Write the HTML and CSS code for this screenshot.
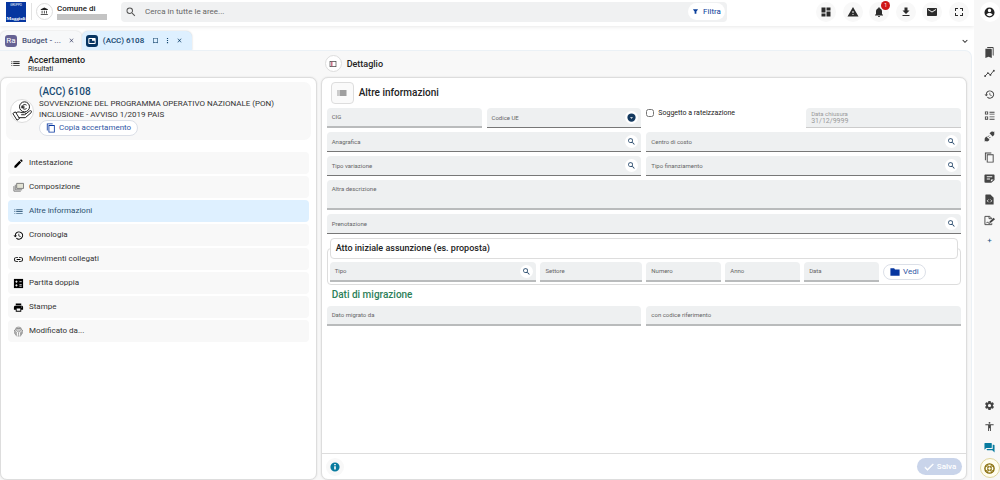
FILE: index.html
```
<!DOCTYPE html>
<html lang="it">
<head>
<meta charset="utf-8">
<meta name="viewport" content="width=device-width, initial-scale=1">
<title>Accertamento (ACC) 6108</title>
<link rel="stylesheet" href="styles.css">
</head>
<body>
<svg class="sprite" aria-hidden="true">
  <symbol id="search" viewBox="0 0 24 24"><path d="M15.5 14h-.79l-.28-.27A6.47 6.47 0 0 0 16 9.5 6.5 6.5 0 1 0 9.500 16c1.610 0 3.090-.59 4.230-1.570l.27.28v.79l5 4.990L20.490 19l-4.990-5zm-6 0C7.010 14 5 11.990 5 9.500S7.010 5 9.500 5 14 7.010 14 9.500 11.990 14 9.500 14z"/></symbol>
  <symbol id="list" viewBox="0 0 24 24"><path d="M3 13h2v-2H3v2zm0 4h2v-2H3v2zm0-8h2V7H3v2zm4 4h14v-2H7v2zm0 4h14v-2H7v2zM7 7v2h14V7H7z"/></symbol>
  <symbol id="close" viewBox="0 0 24 24"><path d="M19 6.410 17.590 5 12 10.590 6.410 5 5 6.410 10.590 12 5 17.590 6.410 19 12 13.410 17.590 19 19 17.590 13.410 12z"/></symbol>
  <symbol id="bank" viewBox="0 0 24 24"><path d="M6.500 10h-2v7h2v-7zm6 0h-2v7h2v-7zm8.500 9H2v2h19v-2zm-2.500-9h-2v7h2v-7zM11.500 1 2 6v2h19V6l-9.500-5z"/></symbol>
  <symbol id="filter" viewBox="0 0 24 24"><path d="M4 4h16v2l-5 6v8h-6v-8L4 6z"/></symbol>
  <symbol id="dashboard" viewBox="0 0 24 24"><path d="M3 13h8V3H3v10zm0 8h8v-6H3v6zm10 0h8V11h-8v10zm0-18v6h8V3h-8z"/></symbol>
  <symbol id="warning" viewBox="0 0 24 24"><path d="M1 21h22L12 2 1 21zm12-3h-2v-2h2v2zm0-4h-2v-4h2v4z"/></symbol>
  <symbol id="bell" viewBox="0 0 24 24"><path d="M12 22c1.100 0 2-.9 2-2h-4c0 1.100.9 2 2 2zm6-6v-5c0-3.070-1.630-5.640-4.500-6.320V4a1.500 1.500 0 0 0-3 0v.68C7.640 5.360 6 7.920 6 11v5l-2 2v1h16v-1l-2-2z"/></symbol>
  <symbol id="download" viewBox="0 0 24 24"><path d="M19 9h-4V3H9v6H5l7 7 7-7zM5 18v2h14v-2H5z"/></symbol>
  <symbol id="mail" viewBox="0 0 24 24"><path d="M20 4H4c-1.100 0-2 .9-2 2v12c0 1.100.9 2 2 2h16c1.100 0 2-.9 2-2V6c0-1.100-.9-2-2-2zm0 4-8 5-8-5V6l8 5 8-5v2z"/></symbol>
  <symbol id="expand" viewBox="0 0 24 24"><path d="M4 4h6v2H6v4H4V4zm10 0h6v6h-2V6h-4V4zM4 14h2v4h4v2H4v-6zm14 0h2v6h-6v-2h4v-4z"/></symbol>
  <symbol id="account" viewBox="0 0 24 24"><path fill-rule="evenodd" d="M12 1a11 11 0 1 0 0 22 11 11 0 0 0 0-22zM12 4a3.700 3.700 0 1 1 0 7.400A3.700 3.700 0 0 1 12 4zm0 16a8 8 0 0 1-6.700-3.600c.1-2.200 4.500-3.400 6.700-3.400s6.600 1.200 6.700 3.400A8 8 0 0 1 12 20z"/></symbol>
  <symbol id="chevron" viewBox="0 0 24 24"><path d="m6 8 6 6 6-6 2 2-8 8-8-8z"/></symbol>
  <symbol id="bookmark" viewBox="0 0 24 24"><path d="M4 3h16v18l-8-2-8 2V3zm2 2v13l6-1 6 1V5H6z"/></symbol>
  <symbol id="more" viewBox="0 0 24 24"><path d="M10 3h4v4h-4zM10 10h4v4h-4zM10 17h4v4h-4z"/></symbol>
  <symbol id="tab" viewBox="0 0 24 24"><path d="M21 3H3c-1.100 0-2 .9-2 2v14c0 1.100.9 2 2 2h18c1.100 0 2-.9 2-2V5c0-1.100-.9-2-2-2zm-1 15H4V6h8v5h8v7z"/></symbol>
  <symbol id="copy" viewBox="0 0 24 24"><path d="M16 1H2v17h2V3h12V1zm5 4H6v18h15V5zm-2 16H8V7h11v14z"/></symbol>
  <symbol id="pencil" viewBox="0 0 24 24"><path d="M3 17.250V21h3.750L17.810 9.940l-3.750-3.750L3 17.250zM20.710 7.040a1 1 0 0 0 0-1.410l-2.340-2.340a1 1 0 0 0-1.410 0l-1.830 1.830 3.750 3.750 1.830-1.830z"/></symbol>
  <symbol id="layers" viewBox="0 0 24 24"><path d="M8 3h15v11H8V3z" fill="#e2e2d4" stroke="currentColor" stroke-width="2"/><path d="M5 6v11h15M2 9v11h15" fill="none" stroke="currentColor" stroke-width="2"/></symbol>
  <symbol id="history" viewBox="0 0 24 24"><path d="M13 3a9 9 0 0 0-9 9H1l3.890 3.890.07.14L9 12H6a7 7 0 1 1 2.060 4.940l-1.420 1.420A9 9 0 1 0 13 3zm-1 5v5l4.280 2.540.72-1.210-3.500-2.080V8H12z"/></symbol>
  <symbol id="link" viewBox="0 0 24 24"><path d="M3.900 12A3.100 3.100 0 0 1 7 8.900h4V7H7a5 5 0 0 0 0 10h4v-1.900H7A3.100 3.100 0 0 1 3.900 12zM8 13h8v-2H8v2zm9-6h-4v1.900h4a3.100 3.100 0 0 1 0 6.200h-4V17h4a5 5 0 0 0 0-10z"/></symbol>
  <symbol id="calc" viewBox="0 0 24 24"><path d="M2 2h20v20H2z"/><path d="M5 8h5M7.500 5.500v5M14 8h5M5 16h5M7.500 13.500v5M14 14.500h5M14 18h5" stroke="#fff" stroke-width="1.700"/></symbol>
  <symbol id="print" viewBox="0 0 24 24"><path d="M19 8H5c-1.660 0-3 1.340-3 3v6h4v4h12v-4h4v-6c0-1.660-1.340-3-3-3zm-3 11H8v-5h8v5zm3-7a1 1 0 1 1 0-2 1 1 0 0 1 0 2zm-1-9H6v4h12V3z"/></symbol>
  <symbol id="finger" viewBox="0 0 24 24"><g fill="none" stroke="currentColor" stroke-width="1.500" stroke-linecap="round"><path d="M6 4.500C9 1.500 15 1.500 18 4.500M3 10C5 3 19 3 21 10M3.500 16C2 7 9 5.500 12 5.500S22 7 20.500 16M5.500 19.500C3.500 12 7 8.500 12 8.500s8 4 6.500 11M8.500 22C5.500 15 8 11.500 12 11.500s5.500 3.500 4 10.500M12 14.500c0 3 0 5 .5 8"/></g></symbol>
  <symbol id="panel" viewBox="0 0 24 24"><path d="M2 3h20v18H2V3zm2 2v14h16V5H4z" fill="#454545"/><path d="M7 5h3v14H7z" fill="#b22a50"/></symbol>
  <symbol id="folder" viewBox="0 0 24 24"><path d="M10 3H1v18h22V6H12z"/></symbol>
  <symbol id="check" viewBox="0 0 24 24"><path d="M9 16.200 4.800 12l-1.400 1.400L9 19 21 7l-1.400-1.400z" stroke="currentColor"/></symbol>
  <symbol id="dropdown" viewBox="0 0 24 24"><path fill-rule="evenodd" d="M12 1a11 11 0 1 0 0 22 11 11 0 0 0 0-22zm0 14-4-4h8z"/></symbol>
  <symbol id="info" viewBox="0 0 24 24"><path fill-rule="evenodd" d="M12 1a11 11 0 1 0 0 22 11 11 0 0 0 0-22zm2 17h-4v-8h4v8zm0-10h-4V5h4v3z"/></symbol>
  <symbol id="bookmarks" viewBox="0 0 24 24"><path d="m19 18 2 1V2c0-1.100-.9-2-2-2H7v2h12v16zM15 4H3v20l7-3 7 3V6c0-1.100-.9-2-2-2z"/></symbol>
  <symbol id="chart" viewBox="0 0 24 24"><path d="m2 18 6.500-7 5.500 4 7-9" fill="none" stroke="currentColor" stroke-width="2"/><circle cx="2.500" cy="17.500" r="2"/><circle cx="8.500" cy="11" r="2"/><circle cx="14" cy="15" r="2"/><circle cx="21.500" cy="6" r="2"/></symbol>
  <symbol id="ballot" viewBox="0 0 24 24"><path d="M2 3h7v7H2V3zm2 2v3h3V5H4zm-2 9h7v7H2v-7zm2 2v3h3v-3H4zm8-12h11v2H12zM12 8h11v2H12zM12 14h11v2H12zM12 19h11v2H12z"/></symbol>
  <symbol id="plug" viewBox="0 0 24 24"><path d="m12 5 7 7 2-2c2-2 2-4 1-6l1-2-1-1-2 1c-2-1-4-1-6 1zM5 12l7 7-2 2c-2 2-4 2-6 1l-2 1-1-1 1-2c-1-2-1-4 1-6z"/><path d="m8 13 3-3M11 16l3-3" stroke="currentColor" stroke-width="2"/></symbol>
  <symbol id="note" viewBox="0 0 24 24"><path d="M3 3h18c1 0 2 1 2 2v10l-7 6H3c-1 0-2-1-2-2V5c0-1 1-2 2-2zm3 4v2h12V7H6zm0 5v2h7v-2H6zm9 7 6-5h-6z" fill-rule="evenodd"/></symbol>
  <symbol id="code" viewBox="0 0 24 24"><path d="M4 1h10l7 7v15H3V2z"/><path d="M10 12l-3 3 3 3M14 12l3 3-3 3" fill="none" stroke="#fff" stroke-width="1.700"/></symbol>
  <symbol id="sign" viewBox="0 0 24 24"><path d="M17 8V7l-5-4H2v18h15v-3M11 3v5h6M5 18l3-3 2 3h4" fill="none" stroke="currentColor" stroke-width="2"/><path d="m12 14 9-8 3 3-9 8h-3z"/></symbol>
  <symbol id="gear" viewBox="0 0 24 24"><path fill-rule="evenodd" d="M19.430 12.980a7.800 7.800 0 0 0 0-1.960l2.110-1.650c.19-.15.240-.42.120-.64l-2-3.460c-.12-.22-.39-.3-.61-.22l-2.490 1a7.300 7.300 0 0 0-1.690-.98l-.38-2.650A.5.5 0 0 0 14 2h-4a.5.5 0 0 0-.49.420l-.38 2.650c-.61.250-1.170.59-1.690.98l-2.490-1a.5.5 0 0 0-.61.220l-2 3.460c-.13.220-.7.490.12.640l2.110 1.650a8 8 0 0 0 0 1.960l-2.110 1.650a.5.5 0 0 0-.12.640l2 3.460c.12.220.39.300.61.220l2.490-1c.52.400 1.080.73 1.690.98l.38 2.650c.3.240.24.420.49.420h4c.25 0 .46-.18.490-.42l.38-2.650a7.300 7.300 0 0 0 1.690-.98l2.490 1c.23.090.49 0 .61-.22l2-3.460a.5.5 0 0 0-.12-.64l-2.110-1.650zM12 15.500a3.500 3.500 0 1 1 0-7 3.500 3.500 0 0 1 0 7z"/></symbol>
  <symbol id="person" viewBox="0 0 24 24"><path d="M12 2a2 2 0 1 1 0 4 2 2 0 0 1 0-4zm9 7h-6v13h-2v-6h-2v6H9V9H3V7h18v2z"/></symbol>
  <symbol id="chat" viewBox="0 0 24 24"><path d="M21 6h-2v9H6v2c0 .55.450 1 1 1h11l5 5V7c0-.55-1-1-2-1zm-4 6V3c0-.55-.45-1-1-1H2c-.55 0-1 .45-1 1v14l4-4h11c.55 0 1-.45 1-1z"/></symbol>
  <symbol id="help" viewBox="0 0 24 24"><circle cx="12" cy="12" r="10" fill="none" stroke="currentColor" stroke-width="3"/><circle cx="12" cy="12" r="4" fill="none" stroke="currentColor" stroke-width="2"/><path d="m4 6 5 4M7 3l3 6M20 6l-5 4M17 3l-3 6M4 18l5-4M7 21l3-6M20 18l-5-4M17 21l-3-6" stroke="currentColor" stroke-width="2"/></symbol>
  <symbol id="coin-hand" viewBox="0 0 24 24"><g fill="none" stroke="currentColor" stroke-width="1.200" stroke-linejoin="round"><circle cx="15" cy="7" r="6"/><path d="M17.500 5c-3-2-5 0-5 2s2 4 5 2M11 6.300h4M11 8h4M1 15l3-2 5 8-3 2zM5 14c3-2 5 0 7 0h3c2 0 2 2 0 2.500h-4M16 16l5-4c2-1 3 0 2 2l-7 6H8"/></g></symbol>
</svg>

<div class="app">
  <div class="main">
    <header class="topbar">
      <div class="logo" aria-label="Logo"><span class="logo-top">GRUPPO</span><span class="logo-name">Maggioli</span></div>
      <div class="org">
        <span class="org-icon"><svg><use href="#bank"/></svg></span>
        <div class="org-text"><span>Comune di</span><span class="org-hidden"></span></div>
      </div>
      <div class="search" role="search">
        <svg><use href="#search"/></svg>
        <input type="search" aria-label="Cerca" placeholder="Cerca in tutte le aree...">
        <button class="filter" type="button"><svg><use href="#filter"/></svg>Filtra</button>
      </div>
      <nav class="tools" aria-label="Strumenti">
        <button type="button" aria-label="Dashboard"><svg><use href="#dashboard"/></svg></button>
        <button type="button" aria-label="Avvisi"><svg><use href="#warning"/></svg></button>
        <button type="button" aria-label="Notifiche"><svg><use href="#bell"/></svg><span class="badge">1</span></button>
        <button type="button" aria-label="Scarica"><svg><use href="#download"/></svg></button>
        <button type="button" aria-label="Messaggi"><svg><use href="#mail"/></svg></button>
        <button type="button" aria-label="Schermo intero"><svg><use href="#expand"/></svg></button>
      </nav>
    </header>

    <nav class="tabs" aria-label="Schede">
      <div class="tab">
        <span class="tab-icon">Ra</span>
        <button type="button" class="tab-name">Budget - ...</button>
        <button type="button" class="tab-action" aria-label="Chiudi"><svg><use href="#close"/></svg></button>
      </div>
      <div class="tab tab-active">
        <span class="tab-icon"><svg><use href="#tab"/></svg></span>
        <button type="button" class="tab-name">(ACC) 6108</button>
        <button type="button" class="tab-action" aria-label="Segnalibro"><svg><use href="#bookmark"/></svg></button>
        <button type="button" class="tab-action" aria-label="Altro"><svg><use href="#more"/></svg></button>
        <button type="button" class="tab-action" aria-label="Chiudi"><svg><use href="#close"/></svg></button>
      </div>
      <button type="button" class="tab-more" aria-label="Tutte le schede"><svg><use href="#chevron"/></svg></button>
    </nav>

    <div class="workspace">
      <section class="side">
        <div class="pane-head">
          <svg><use href="#list"/></svg>
          <div><h1>Accertamento</h1><p>Risultati</p></div>
        </div>
        <div class="pane">
          <div class="summary">
            <span class="summary-icon"><svg><use href="#coin-hand"/></svg></span>
            <div class="summary-body">
              <h2>(ACC) 6108</h2>
              <p>SOVVENZIONE DEL PROGRAMMA OPERATIVO NAZIONALE (PON)<br>INCLUSIONE - AVVISO 1/2019 PAIS</p>
              <button type="button" class="pill"><svg><use href="#copy"/></svg>Copia accertamento</button>
            </div>
          </div>
          <ul class="menu">
            <li><a href="#"><svg><use href="#pencil"/></svg>Intestazione</a></li>
            <li><a href="#"><svg class="soft"><use href="#layers"/></svg>Composizione</a></li>
            <li><a href="#" class="current" aria-current="page"><svg><use href="#list"/></svg>Altre informazioni</a></li>
            <li><a href="#"><svg><use href="#history"/></svg>Cronologia</a></li>
            <li><a href="#"><svg><use href="#link"/></svg>Movimenti collegati</a></li>
            <li><a href="#"><svg><use href="#calc"/></svg>Partita doppia</a></li>
            <li><a href="#"><svg><use href="#print"/></svg>Stampe</a></li>
            <li><a href="#"><svg class="soft"><use href="#finger"/></svg>Modificato da...</a></li>
          </ul>
        </div>
      </section>

      <main class="detail">
        <div class="pane-head">
          <button type="button" class="toggle" aria-label="Mostra pannello"><svg><use href="#panel"/></svg></button>
          <h1>Dettaglio</h1>
        </div>
        <form class="pane card">
          <div class="card-title"><span class="title-icon"><svg><use href="#list"/></svg></span><h2>Altre informazioni</h2></div>
          <div class="fields">
            <div class="field light"><label for="cig">CIG</label><input id="cig"></div>
            <div class="field"><label for="ue">Codice UE</label><input id="ue"><button type="button" aria-label="Apri elenco"><svg><use href="#dropdown"/></svg></button></div>
            <div class="tick"><input type="checkbox" id="rate"><label for="rate">Soggetto a rateizzazione</label></div>
            <div class="field filled"><label for="chiusura">Data chiusura</label><input id="chiusura" value="31/12/9999" disabled></div>
            <div class="field half"><label for="anag">Anagrafica</label><input id="anag"><button type="button" aria-label="Cerca anagrafica"><svg><use href="#search"/></svg></button></div>
            <div class="field half"><label for="centro">Centro di costo</label><input id="centro"><button type="button" aria-label="Cerca centro"><svg><use href="#search"/></svg></button></div>
            <div class="field half"><label for="variaz">Tipo variazione</label><input id="variaz"><button type="button" aria-label="Cerca variazione"><svg><use href="#search"/></svg></button></div>
            <div class="field half"><label for="finanz">Tipo finanziamento</label><input id="finanz"><button type="button" aria-label="Cerca finanziamento"><svg><use href="#search"/></svg></button></div>
            <div class="field full area"><label for="descr">Altra descrizione</label><textarea id="descr" rows="1"></textarea></div>
            <div class="field full"><label for="pren">Prenotazione</label><input id="pren"><button type="button" aria-label="Cerca prenotazione"><svg><use href="#search"/></svg></button></div>
          </div>
          <fieldset class="act">
            <legend>Atto iniziale assunzione (es. proposta)</legend>
            <div class="act-fields">
              <div class="field light"><label for="tipo">Tipo</label><input id="tipo"><button type="button" aria-label="Cerca tipo"><svg><use href="#search"/></svg></button></div>
              <div class="field light"><label for="settore">Settore</label><input id="settore"></div>
              <div class="field light"><label for="numero">Numero</label><input id="numero"></div>
              <div class="field light"><label for="anno">Anno</label><input id="anno"></div>
              <div class="field light"><label for="data">Data</label><input id="data"></div>
              <button type="button" class="pill"><svg><use href="#folder"/></svg>Vedi</button>
            </div>
          </fieldset>
          <h3>Dati di migrazione</h3>
          <div class="fields">
            <div class="field half light"><label for="migrato">Dato migrato da</label><input id="migrato"></div>
            <div class="field half light"><label for="rif">con codice riferimento</label><input id="rif"></div>
          </div>
          <div class="card-foot">
            <button type="button" class="info" aria-label="Informazioni"><svg><use href="#info"/></svg></button>
            <button type="submit" class="save" disabled><svg><use href="#check"/></svg>Salva</button>
          </div>
        </form>
      </main>
    </div>
  </div>

  <aside class="rail" aria-label="Collegamenti">
    <button type="button" class="profile" aria-label="Profilo"><svg><use href="#account"/></svg></button>
    <button type="button" aria-label="Segnalibri"><svg><use href="#bookmarks"/></svg></button>
    <button type="button" aria-label="Andamento"><svg><use href="#chart"/></svg></button>
    <button type="button" aria-label="Cronologia"><svg><use href="#history"/></svg></button>
    <button type="button" aria-label="Elenco"><svg><use href="#ballot"/></svg></button>
    <button type="button" aria-label="Connessioni"><svg><use href="#plug"/></svg></button>
    <button type="button" aria-label="Copia"><svg><use href="#copy"/></svg></button>
    <button type="button" aria-label="Note"><svg><use href="#note"/></svg></button>
    <button type="button" aria-label="Codice"><svg><use href="#code"/></svg></button>
    <button type="button" aria-label="Firma"><svg><use href="#sign"/></svg></button>
    <button type="button" class="plus">+</button>
    <span class="rail-space"></span>
    <button type="button" aria-label="Impostazioni"><svg><use href="#gear"/></svg></button>
    <button type="button" aria-label="Accessibilità"><svg><use href="#person"/></svg></button>
    <button type="button" class="chat" aria-label="Chat"><svg><use href="#chat"/></svg></button>
    <button type="button" class="help" aria-label="Aiuto"><svg><use href="#help"/></svg></button>
  </aside>
</div>
</body>
</html>
```
FILE: styles.css
```
* { box-sizing: border-box; }
body { margin: 0; background: #fff; color: #222; font: 8px/12px Roboto, "Liberation Sans", sans-serif; }
h1, h2, h3, p, ul { margin: 0; padding: 0; }
button, input, textarea { font: inherit; color: inherit; }
button { display: flex; align-items: center; justify-content: center; margin: 0; padding: 0; border: 0; background: none; cursor: pointer; }
svg { display: block; flex: none; width: 12px; height: 12px; fill: currentColor; }
.sprite { position: absolute; width: 0; height: 0; }

.app { display: flex; min-height: 100vh; }
.main { display: flex; flex: 1; flex-direction: column; min-width: 0; }

/* Top bar */
.topbar { display: flex; align-items: center; height: 26px; padding: 0 5px 3px 6px; box-shadow: 0 1px 4px #e8e8e8; }
.logo { display: flex; flex-direction: column; justify-content: space-between; align-items: center; width: 20px; height: 20px; background: #0636a0; color: #fff; overflow: hidden; }
.logo-top { font-size: 3px; line-height: 6px; }
.logo-name { font: bold 5px/7px "Liberation Serif", serif; }
.org { display: flex; align-items: center; gap: 4px; width: 95px; margin-left: 5px; padding-left: 4px; border-left: 1px solid #e2e2e2; }
.org-icon { display: grid; place-items: center; width: 17px; height: 17px; border: 1px solid #ddd; border-radius: 50%; }
.org-icon svg { width: 9px; height: 9px; }
.org-text { font-size: 8px; font-weight: 500; line-height: 10px; }
.org-hidden { display: block; width: 50px; height: 6px; background: #c4c4c4; }
.search { display: flex; align-items: center; flex: 1; height: 20px; margin-right: 89px; margin-left: -5px; padding: 0 2px 0 4px; border-radius: 4px; background: #f0f1f2; color: #555; }
.search input { flex: 1; min-width: 0; padding: 0 8px; border: 0; outline: 0; background: none; font-size: 8px; }
.search input::placeholder { color: #666; opacity: 1; }
.filter { gap: 4px; width: 37px; height: 17px; border-radius: 9px; background: #fff; color: #0b409c; }
.filter svg { width: 7px; height: 7px; }
.tools { display: flex; justify-content: space-between; width: 153px; }
.tools button { position: relative; width: 20px; height: 20px; border-radius: 50%; background: #f8f8f8; color: #2b2b2b; }
.badge { position: absolute; top: -1px; right: -1px; width: 9px; height: 9px; border-radius: 50%; background: #cf1717; color: #fff; font-size: 5px; line-height: 9px; }

/* Tabs */
.tabs { display: flex; align-items: flex-end; height: 24px; padding-right: 3px; }
.tab { display: flex; align-items: center; height: 19px; padding: 0 4px 0 5px; border-radius: 6px 6px 0 0; background: #f7f8f9; box-shadow: 0 0 2px #ccc; color: #4d5376; font-weight: 500; }
.tab-active { padding: 0 7px 0 4px; background: #def0ff; color: #14456e; }
.tab-icon { display: grid; place-items: center; width: 12px; height: 12px; margin-right: 5px; border-radius: 3px; background: #666293; color: #fff; font-size: 8px; font-weight: 400; }
.tab-active .tab-icon { background: #063563; }
.tab-icon svg { width: 8px; height: 8px; }
.tab-name { margin-right: 5px; }
.tab-action { width: 12px; height: 12px; }
.tab-action svg { width: 7px; height: 7px; }
.tab-more { width: 12px; height: 19px; margin-left: auto; }
.tab-more svg { width: 8px; height: 8px; }

/* Workspace */
.workspace { display: flex; flex: 1; gap: 4px; margin-right: 2px; padding: 0 4px 0 0; border: 1px solid #ebf1f6; border-left: 0; border-bottom: 0; border-radius: 0 7px 0 0; background: #f8f8f8; }
.side { display: flex; flex: 317; flex-direction: column; min-width: 0; }
.detail { display: flex; flex: 647; flex-direction: column; min-width: 0; }
.pane-head { display: flex; align-items: center; gap: 7px; height: 26px; padding: 0 0 1px 10px; color: #222; }
.pane-head h1 { font-size: 9px; font-weight: 500; line-height: 10px; }
.pane-head p { font-size: 7px; line-height: 8px; }
.pane-head svg { width: 11px; height: 11px; }
.detail .pane-head { gap: 5px; padding-left: 4px; }
.toggle { width: 17px; height: 17px; border: 1px solid #ddd; border-radius: 50%; background: #fff; }
.toggle svg { width: 8px; height: 8px; }
.pane { display: flex; flex: 1; flex-direction: column; border: 1px solid #ddd; border-radius: 7px; background: #fff; box-shadow: 0 0 2px #ddd; }
.side .pane { padding: 4px 5px; }

/* Record summary */
.summary { display: flex; align-items: center; gap: 5px; min-height: 58px; padding: 2px 4px; border-radius: 7px; background: #f8f8f8; }
.summary-icon { display: grid; place-items: center; width: 24px; height: 24px; border: 1px solid #ddd; border-radius: 50%; background: #fff; }
.summary-icon svg { width: 20px; height: 20px; }
.summary-body { flex: 1; }
.summary h2 { color: #174a73; font-size: 10px; font-weight: 500; line-height: 12px; }
.summary p { color: #333; font-size: 7px; }
.pill { gap: 3px; height: 16px; padding: 0 6px; border: 1px solid #dce0e8; border-radius: 8px; background: #fff; color: #3157a5; }
.pill svg { width: 10px; height: 10px; color: #0636a0; }
.summary p { font-size: 8px; line-height: 11px; }

/* Section menu */
.menu { display: flex; flex-direction: column; gap: 2px; margin: 12px 2px 0; list-style: none; }
.menu a { display: flex; align-items: center; gap: 5px; height: 22px; padding: 0 5px; border-radius: 4px; background: #f8f8f8; color: #333; text-decoration: none; }
.menu svg { width: 11px; height: 11px; color: #000; }
.menu .soft { color: #777; }
.menu .current { background: #def0ff; color: #2d506e; }
.menu .current svg { color: #426888; }

/* Detail form */
.card { padding: 4px 5px 0; }
.card-title { display: flex; align-items: center; gap: 5px; margin-bottom: 4px; padding-left: 4px; }
.card-title h2 { font-size: 10px; font-weight: 500; }
.title-icon { display: grid; place-items: center; width: 23px; height: 22px; border: 1px solid #ddd; border-radius: 4px; background: #fafafa; color: #444; }
.fields { display: grid; grid-template-columns: repeat(4, minmax(0, 1fr)); gap: 4px 5px; }
.half { grid-column: span 2; }
.full { grid-column: 1 / -1; }
.field { display: grid; grid-template-columns: minmax(0, 1fr) auto; align-items: center; height: 20px; padding: 0 3px 0 5px; border-bottom: 1px solid #777; border-radius: 4px 4px 0 0; background: #eef0f1; }
.field label { grid-area: 1 / 1; color: #666; font-size: 6px; line-height: 8px; }
.field input, .field textarea { grid-area: 1 / 1; align-self: stretch; width: 100%; min-width: 0; height: 100%; padding: 0; border: 0; outline: 0; background: none; font-size: 7px; resize: none; }
.field button { grid-area: 1 / 2; width: 13px; height: 13px; border-radius: 50%; background: #fff; color: #14395f; }
.field button svg { width: 9px; height: 9px; }
.field.light { border-bottom: 2px solid #b9bbbc; }
.field.area { align-items: start; height: 30px; padding-top: 5px; border-bottom: 2px solid #b9bbbc; }
.field.filled { align-content: center; border-color: #ccc; color: #999; }
.filled label { grid-area: 1 / 1 / 2 / 3; color: #999; line-height: 7px; }
.field.filled input { grid-area: 2 / 1 / 3 / 3; height: 8px; line-height: 8px; }
.tick { display: flex; align-items: center; align-self: start; gap: 4px; height: 10px; }
.tick input { width: 8px; height: 8px; margin: 0; }
.tick label { font-size: 7px; }
.act { min-width: 0; margin: 4px 0 0; padding: 3px 2px 2px; border: 1px solid #ddd; border-radius: 4px; }
.act legend { width: 100%; padding: 3px 5px; border: 1px solid #ddd; border-radius: 4px; background: #fff; font-size: 9px; font-weight: 500; line-height: 13px; }
.act-fields { display: grid; grid-template-columns: 207fr 102fr 75fr 75fr 75fr 75fr; align-items: center; gap: 4px; }
.act-fields .pill { justify-self: start; }
.card h3 { padding: 4px 5px 5px; color: #2c8059; font-size: 10px; font-weight: 500; line-height: 12px; }
.card-foot { display: flex; align-items: center; justify-content: space-between; height: 26px; margin: auto -5px 0; padding: 0 4px; border-top: 1px solid #ddd; }
.info { width: 18px; height: 18px; border-radius: 50%; background: #f8f8f8; color: #087b9f; }
.info svg { width: 10px; height: 10px; }
.save { gap: 2px; width: 45px; height: 17px; border-radius: 9px; background: #c9d4ea; color: #fff; font-weight: 500; }

/* Right rail */
.rail { display: flex; flex-direction: column; align-items: center; gap: 1px; width: 26px; padding: 2px 0 2px 5px; background: #f7f7f7; color: #444; }
.rail button { width: 20px; height: 20px; border-radius: 50%; }
.rail svg { width: 11px; height: 11px; }
.rail .profile { margin-bottom: 19px; background: #fff; color: #222; }
.rail .plus { color: #245484; }
.rail-space { flex: 1; }
.rail .chat { color: #087b9f; }
.rail .help { border: 1px solid #e1d69e; background: #fffdf0; color: #826700; }
```
